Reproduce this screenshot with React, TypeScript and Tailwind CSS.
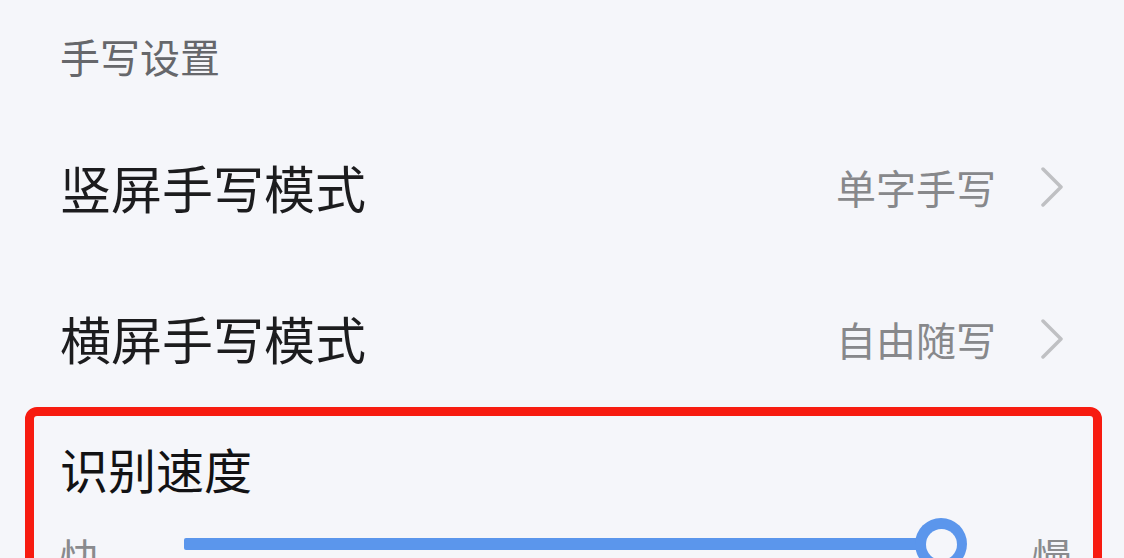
import React from 'react'

const FONT = { fontFamily: '"Noto Sans CJK SC", "Noto Sans", sans-serif' }

function Chevron() {
  return (
    <svg width="24" height="40" viewBox="0 0 24 40" fill="none" className="ml-[44px]">
      <path d="M3 2 L21 20 L3 38" stroke="#bfc0c3" strokeWidth="3.5" strokeLinecap="round" strokeLinejoin="round" />
    </svg>
  )
}

function SettingRow({ label, value, className }: { label: string; value: string; className: string }) {
  return (
    <div className={`flex items-center pl-[60px] pr-[60px] ${className}`}>
      <span className="text-[51px] leading-none text-[#1c1c1e]">{label}</span>
      <div className="ml-auto flex items-center">
        <span className="text-[40px] leading-none text-[#87888b]">{value}</span>
        <Chevron />
      </div>
    </div>
  )
}

export default function App() {
  return (
    <div className="h-screen w-full overflow-hidden bg-[#f5f6fa]" style={FONT}>
      {/* section header */}
      <div className="flex h-[112px] items-center pl-[60px]">
        <span className="text-[40px] leading-none text-[#66676b]">手写设置</span>
      </div>

      <SettingRow label="竖屏手写模式" value="单字手写" className="h-[150px]" />
      <SettingRow label="横屏手写模式" value="自由随写" className="h-[145px] pt-[8px]" />

      {/* recognition speed, outlined in red */}
      <div className="ml-[25px] mr-[22px] h-[200px] rounded-[12px] border-[9px] border-[#f71b10] pl-[26px] pr-[21px]">
        <div className="pt-[28px] text-[48px] leading-none text-[#121214]">识别速度</div>
        <div className="mt-[24px] flex items-start">
          <span className="mt-[20px] w-[124px] text-[40px] leading-none text-[#8a8b8e]">快</span>
          <div className="relative mt-[22px] h-[12px] flex-1 rounded-[2px] bg-[#5b96ec]">
            <div className="absolute right-[-26px] top-[-20px] flex h-[52px] w-[52px] items-center justify-center rounded-full bg-[#5b96ec]">
              <div className="h-[31px] w-[31px] rounded-full bg-[#f5f6fa]" />
            </div>
          </div>
          <span className="ml-[91px] mt-[20px] text-[40px] leading-none text-[#8a8b8e]">慢</span>
        </div>
      </div>
    </div>
  )
}
